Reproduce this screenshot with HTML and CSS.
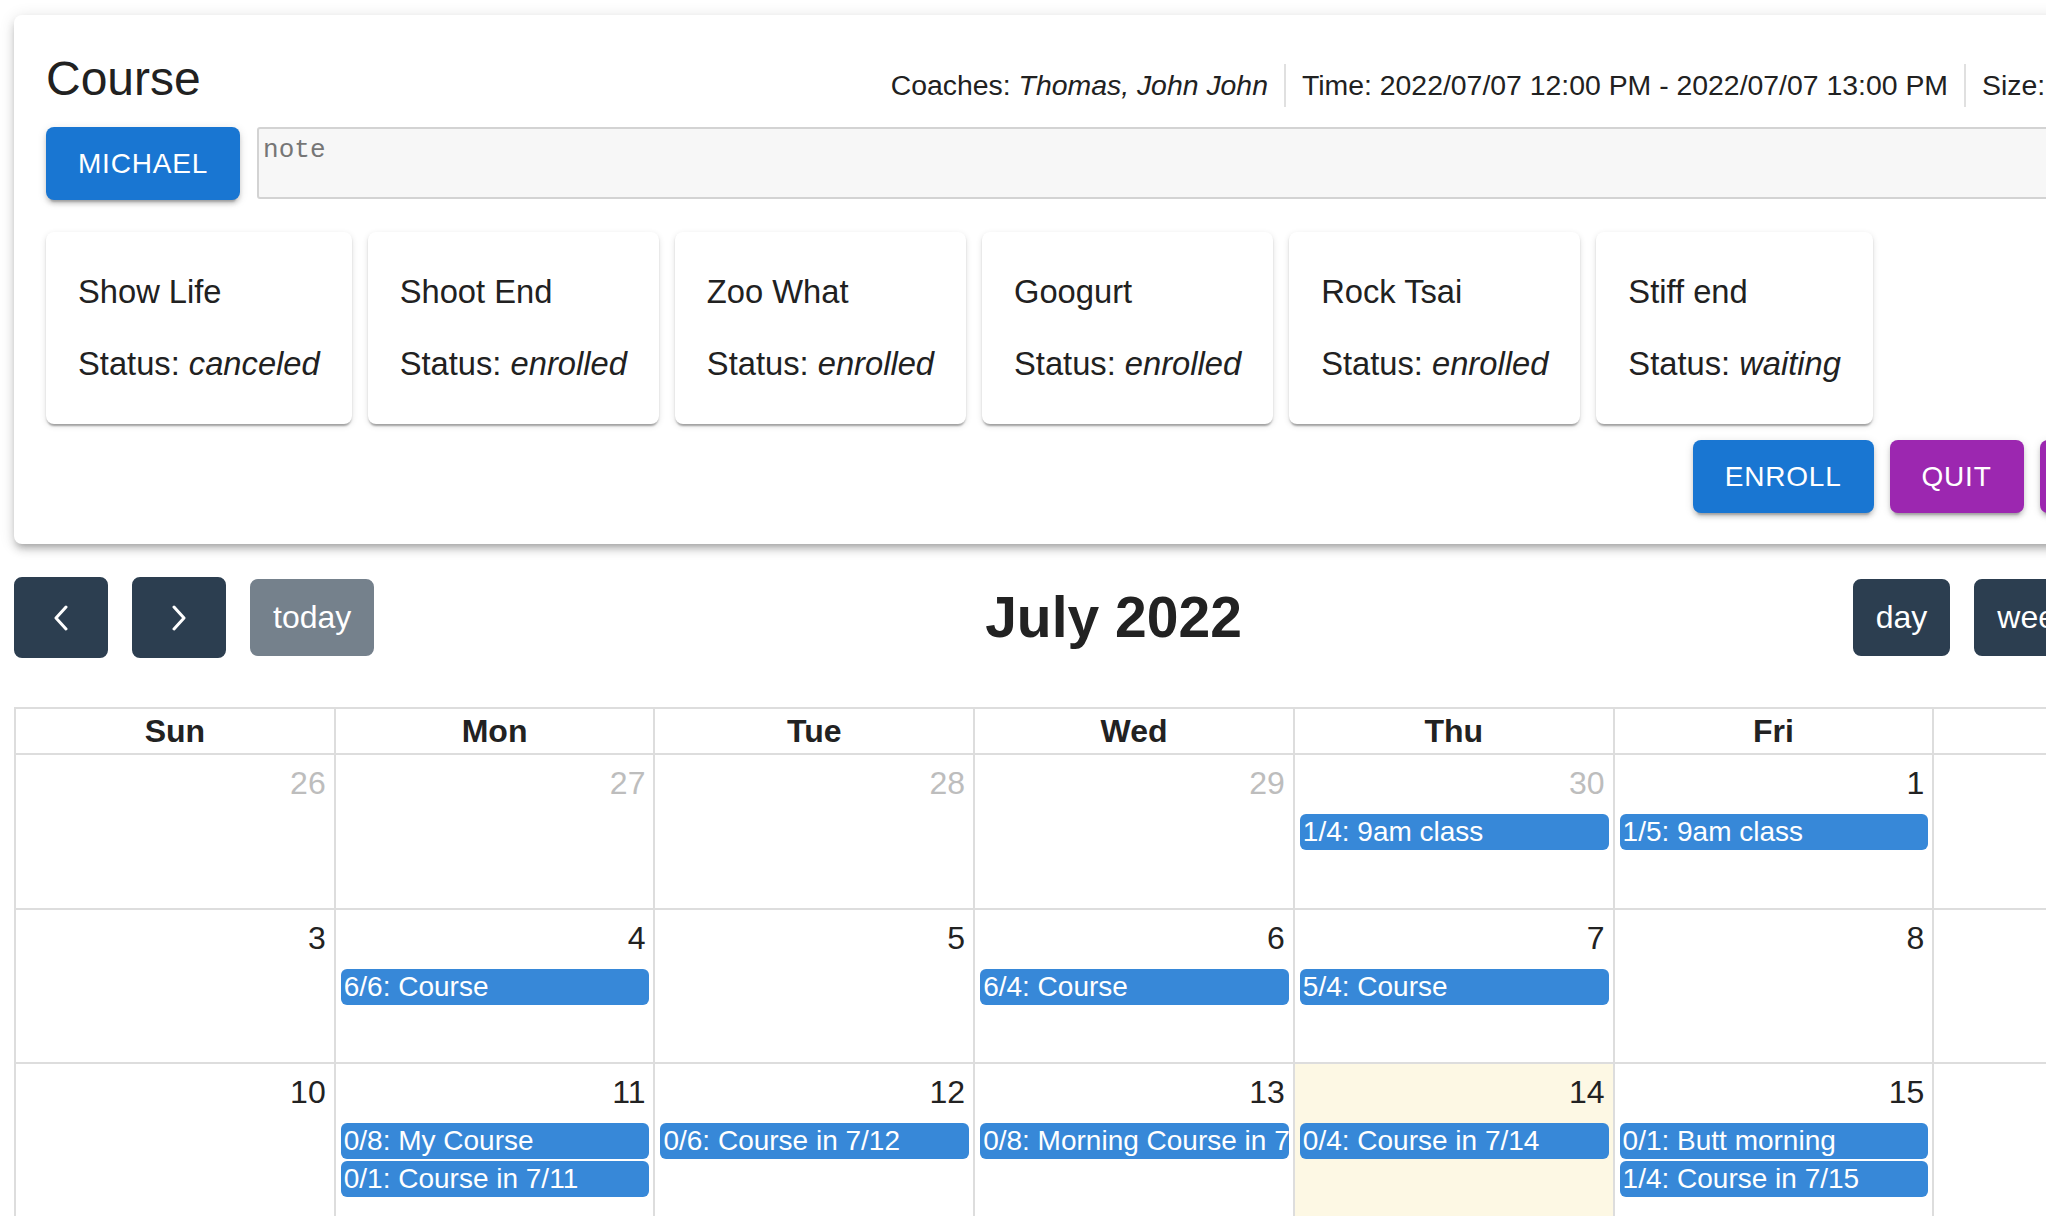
FILE: index.html
```html
<!DOCTYPE html>
<html lang="en">
<head>
<meta charset="utf-8">
<title>Course</title>
<link rel="stylesheet" href="styles.css">
</head>
<body>
<div class="page">
  <section class="course-card">
    <header class="course-head">
      <h1 class="course-title">Course</h1>
      <div class="course-info">
        <div class="info-item">Coaches: <em>Thomas, John John</em></div>
        <div class="info-item">Time: 2022/07/07 12:00 PM - 2022/07/07 13:00 PM</div>
        <div class="info-item info-size">Size: 6</div>
      </div>
    </header>
    <div class="note-row">
      <button class="btn btn-primary">MICHAEL</button>
      <textarea class="note" placeholder="note"></textarea>
    </div>
    <div class="students">
      <div class="student"><div class="student-name">Show Life</div><div class="student-status">Status: <em>canceled</em></div></div>
      <div class="student"><div class="student-name">Shoot End</div><div class="student-status">Status: <em>enrolled</em></div></div>
      <div class="student"><div class="student-name">Zoo What</div><div class="student-status">Status: <em>enrolled</em></div></div>
      <div class="student"><div class="student-name">Googurt</div><div class="student-status">Status: <em>enrolled</em></div></div>
      <div class="student"><div class="student-name">Rock Tsai</div><div class="student-status">Status: <em>enrolled</em></div></div>
      <div class="student"><div class="student-name">Stiff end</div><div class="student-status">Status: <em>waiting</em></div></div>
    </div>
    <div class="actions">
      <button class="btn btn-primary">ENROLL</button>
      <button class="btn btn-secondary">QUIT</button>
      <button class="btn btn-secondary">CANCEL</button>
    </div>
  </section>

  <div class="cal-toolbar">
    <div class="tb-chunk">
      <button class="fc-btn fc-icon-btn" aria-label="prev">
        <svg width="16" height="26" viewBox="0 0 16 26"><polyline points="13,2 3,13 13,24" fill="none" stroke="#fff" stroke-width="3" stroke-linecap="round" stroke-linejoin="round"/></svg>
      </button>
      <button class="fc-btn fc-icon-btn" aria-label="next">
        <svg width="16" height="26" viewBox="0 0 16 26"><polyline points="3,2 13,13 3,24" fill="none" stroke="#fff" stroke-width="3" stroke-linecap="round" stroke-linejoin="round"/></svg>
      </button>
      <button class="fc-btn fc-disabled">today</button>
    </div>
    <h2 class="cal-title">July 2022</h2>
    <div class="tb-chunk">
      <button class="fc-btn">day</button>
      <button class="fc-btn">week</button>
      <button class="fc-btn">month</button>
    </div>
  </div>

  <div class="cal-grid">
    <div class="cal-head">Sun</div>
    <div class="cal-head">Mon</div>
    <div class="cal-head">Tue</div>
    <div class="cal-head">Wed</div>
    <div class="cal-head">Thu</div>
    <div class="cal-head">Fri</div>
    <div class="cal-head">Sat</div>

    <div class="day other"><div class="num">26</div></div>
    <div class="day other"><div class="num">27</div></div>
    <div class="day other"><div class="num">28</div></div>
    <div class="day other"><div class="num">29</div></div>
    <div class="day other"><div class="num">30</div><div class="events"><div class="ev">1/4: 9am class</div></div></div>
    <div class="day"><div class="num">1</div><div class="events"><div class="ev">1/5: 9am class</div></div></div>
    <div class="day"><div class="num">2</div></div>

    <div class="day"><div class="num">3</div></div>
    <div class="day"><div class="num">4</div><div class="events"><div class="ev">6/6: Course</div></div></div>
    <div class="day"><div class="num">5</div></div>
    <div class="day"><div class="num">6</div><div class="events"><div class="ev">6/4: Course</div></div></div>
    <div class="day"><div class="num">7</div><div class="events"><div class="ev">5/4: Course</div></div></div>
    <div class="day"><div class="num">8</div></div>
    <div class="day"><div class="num">9</div></div>

    <div class="day"><div class="num">10</div></div>
    <div class="day"><div class="num">11</div><div class="events"><div class="ev">0/8: My Course</div><div class="ev">0/1: Course in 7/11</div></div></div>
    <div class="day"><div class="num">12</div><div class="events"><div class="ev">0/6: Course in 7/12</div></div></div>
    <div class="day"><div class="num">13</div><div class="events"><div class="ev">0/8: Morning Course in 7/13</div></div></div>
    <div class="day today"><div class="num">14</div><div class="events"><div class="ev">0/4: Course in 7/14</div></div></div>
    <div class="day"><div class="num">15</div><div class="events"><div class="ev">0/1: Butt morning</div><div class="ev">1/4: Course in 7/15</div></div></div>
    <div class="day"><div class="num">16</div></div>

    <div class="day"><div class="num">17</div></div>
    <div class="day"><div class="num">18</div></div>
    <div class="day"><div class="num">19</div></div>
    <div class="day"><div class="num">20</div></div>
    <div class="day"><div class="num">21</div></div>
    <div class="day"><div class="num">22</div></div>
    <div class="day"><div class="num">23</div></div>

    <div class="day"><div class="num">24</div></div>
    <div class="day"><div class="num">25</div></div>
    <div class="day"><div class="num">26</div></div>
    <div class="day"><div class="num">27</div></div>
    <div class="day"><div class="num">28</div></div>
    <div class="day"><div class="num">29</div></div>
    <div class="day"><div class="num">30</div></div>

    <div class="day"><div class="num">31</div></div>
    <div class="day other"><div class="num">1</div></div>
    <div class="day other"><div class="num">2</div></div>
    <div class="day other"><div class="num">3</div></div>
    <div class="day other"><div class="num">4</div></div>
    <div class="day other"><div class="num">5</div></div>
    <div class="day other"><div class="num">6</div></div>
  </div>
</div>
</body>
</html>
```

FILE: styles.css
```css
html, body {
  margin: 0;
  padding: 0;
  background: #fff;
  overflow: hidden;
}

body {
  font-family: "Liberation Sans", Arial, Helvetica, sans-serif;
  color: #212121;
}

.page {
  width: 2240px;
  padding: 15px 0 0 14px;
}

/* ---------- Course card ---------- */
.course-card {
  background: #fff;
  border-radius: 8px;
  padding: 32px 32px 31px 32px;
  box-shadow: 0 6px 6px -4px rgba(0,0,0,0.2), 0 6px 8px 0 rgba(0,0,0,0.14), 0 2px 16px 0 rgba(0,0,0,0.12);
}

.course-head {
  display: flex;
  align-items: baseline;
  margin-bottom: 16px;
}

.course-title {
  margin: 0;
  font-size: 48px;
  font-weight: 400;
  line-height: 64px;
  color: #212121;
}

.course-info {
  margin-left: auto;
  display: flex;
  align-items: baseline;
  font-size: 28.4px;
  line-height: 43px;
  color: #212121;
}

.info-item + .info-item {
  border-left: 2px solid #e0e0e0;
  margin-left: 16px;
  padding-left: 16px;
}

.info-size {
  min-width: 240px;
}

.note-row {
  display: flex;
  align-items: flex-start;
  gap: 17px;
}

.btn {
  height: 73px;
  padding: 0 32px;
  border: none;
  border-radius: 8px;
  font-family: "Liberation Sans", Arial, Helvetica, sans-serif;
  font-size: 28px;
  font-weight: 400;
  letter-spacing: 0.8px;
  color: #fff;
  box-shadow: 0 6px 2px -4px rgba(0,0,0,0.2), 0 4px 4px 0 rgba(0,0,0,0.14), 0 2px 10px 0 rgba(0,0,0,0.12);
}

.btn-primary { background: #1976d2; }
.btn-secondary { background: #9c27b0; }

.note {
  flex: 1;
  height: 72px;
  box-sizing: border-box;
  margin: 0;
  padding: 6px 4px;
  background: #f7f7f7;
  border: 2px solid #d3d3d3;
  border-radius: 3px;
  font-family: "Liberation Mono", "DejaVu Sans Mono", monospace;
  font-size: 26px;
  resize: none;
}

.note::placeholder {
  color: #767676;
}

.students {
  display: flex;
  gap: 16px;
  margin-top: 32px;
}

.student {
  padding: 36px 32px;
  border-radius: 8px;
  background: #fff;
  box-shadow: 0 4px 2px -2px rgba(0,0,0,0.2), 0 2px 2px 0 rgba(0,0,0,0.14), 0 2px 6px 0 rgba(0,0,0,0.12);
  font-size: 32.7px;
  line-height: 48px;
  white-space: nowrap;
}

.student-status {
  margin-top: 24px;
}

.actions {
  display: flex;
  justify-content: flex-end;
  gap: 16px;
  margin-top: 16px;
}

/* ---------- Calendar toolbar ---------- */
.cal-toolbar {
  display: flex;
  justify-content: space-between;
  align-items: center;
  margin-top: 33px;
  margin-bottom: 49px;
  height: 81px;
}

.tb-chunk {
  display: flex;
  align-items: center;
  gap: 24px;
}

.fc-btn {
  height: 77px;
  padding: 0 21px;
  background: #2c3e50;
  border: 2px solid #2c3e50;
  border-radius: 8px;
  color: #fff;
  font-family: "Liberation Sans", Arial, Helvetica, sans-serif;
  font-size: 32px;
}

.fc-icon-btn {
  height: 81px;
  width: 94px;
  padding: 0;
  display: flex;
  align-items: center;
  justify-content: center;
}

.fc-disabled {
  opacity: 0.65;
}

.cal-title {
  margin: 0;
  font-size: 57px;
  font-weight: 700;
  color: #222;
  line-height: 1.2;
}

/* ---------- Calendar grid ---------- */
.cal-grid {
  display: grid;
  grid-template-columns: repeat(7, 1fr);
  grid-template-rows: 46px repeat(6, 154.5px);
  border-top: 2px solid #ddd;
  border-left: 2px solid #ddd;
  color: #222;
}

.cal-head {
  box-sizing: border-box;
  border-right: 2px solid #ddd;
  border-bottom: 2px solid #ddd;
  text-align: center;
  font-size: 32px;
  font-weight: 700;
  line-height: 44px;
}

.day {
  box-sizing: border-box;
  border-right: 2px solid #ddd;
  border-bottom: 2px solid #ddd;
  padding-top: 4px;
  overflow: hidden;
  min-width: 0;
}

.day.today {
  background: #fdf8e4;
}

.num {
  font-size: 32px;
  line-height: 48px;
  text-align: right;
  padding-right: 8px;
}

.day.other .num {
  color: #bdbdbd;
}

.events {
  margin-top: 7px;
}

.ev {
  height: 36px;
  margin: 0 4px 2px 5px;
  padding: 0 3px;
  background: #3788d8;
  border-radius: 6px;
  color: #fff;
  font-size: 28px;
  line-height: 36px;
  white-space: nowrap;
  overflow: hidden;
}
```
